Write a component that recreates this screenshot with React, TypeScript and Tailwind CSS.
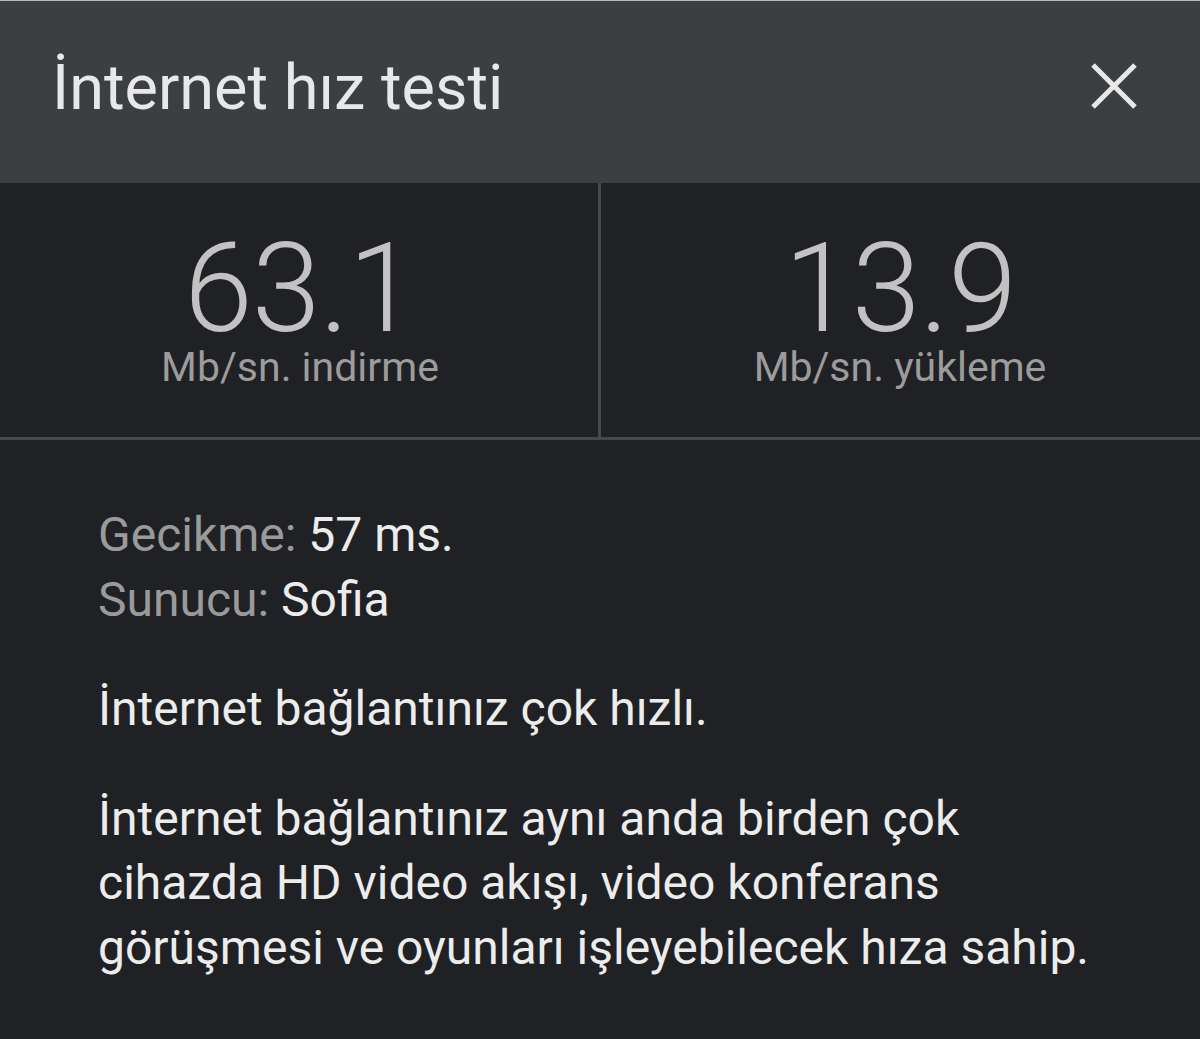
import React from "react";

const stats = [
  { value: "63.1", label: "Mb/sn. indirme" },
  { value: "13.9", label: "Mb/sn. yükleme" },
];

export default function App() {
  return (
    <div className="w-[1200px] h-[1039px] bg-[#202124] font-['Roboto',sans-serif] overflow-hidden">
      {/* header */}
      <div className="h-[183px] bg-[#3c3f42] border-t border-[#b8babc] flex items-center justify-between pl-[52px] pr-[62px]">
        <h1 className="text-[63px] leading-none text-[#e8e8e8] font-normal -mt-[10px]">İnternet hız testi</h1>
        <button className="w-[48px] h-[48px] flex items-center justify-center -mt-[12px]">
          <svg width="48" height="48" viewBox="0 0 48 48">
            <path d="M3 3 L45 45 M45 3 L3 45" stroke="#e8e8e8" strokeWidth="5" />
          </svg>
        </button>
      </div>

      {/* stats */}
      <div className="grid grid-cols-[599px_1fr] h-[257px] border-b-[3px] border-[#46484a]">
        {stats.map((s, i) => (
          <div
            key={s.label}
            className={
              "flex flex-col items-center pt-[58px] " +
              (i === 1 ? "border-l-[3px] border-[#46484a] -ml-[1px] pr-[1px]" : "pl-[1px]")
            }
          >
            <div className="text-[124px] leading-[96px] font-light text-[#c2c2c2] tracking-[-1px]">{s.value}</div>
            <div className="text-[41px] leading-[41px] text-[#9c9c9c] mt-[10px]">{s.label}</div>
          </div>
        ))}
      </div>

      {/* details */}
      <div className="pl-[98px] pr-[92px] pt-[63px] text-[48px] leading-[64.5px]">
        <div>
          <span className="text-[#9a9a9a]">Gecikme: </span>
          <span className="text-[#ececec]">57 ms.</span>
        </div>
        <div>
          <span className="text-[#9a9a9a]">Sunucu: </span>
          <span className="text-[#ececec]">Sofia</span>
        </div>
        <p className="text-[#ececec] mt-[45px]">İnternet bağlantınız çok hızlı.</p>
        <p className="text-[#ececec] mt-[45px]">
          İnternet bağlantınız aynı anda birden çok cihazda HD video akışı, video konferans görüşmesi ve oyunları işleyebilecek hıza sahip.
        </p>
      </div>
    </div>
  );
}
